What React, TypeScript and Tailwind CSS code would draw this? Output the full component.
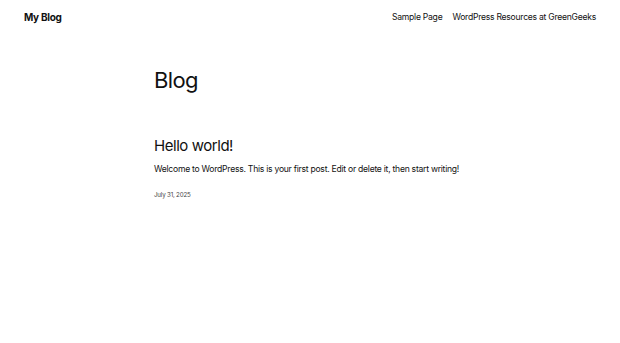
import React from 'react'

const App = () => {
    return (
        <div className="min-h-[343px] w-full bg-white text-[#111111]" style={{ fontFamily: 'Inter, "Noto Sans", sans-serif' }}>
            <header className="flex h-[34px] items-center justify-between px-6">
                <a className="text-[10px] font-bold tracking-[-0.03em]">My Blog</a>
                <nav className="flex gap-[10px] text-[8.6px] tracking-[-0.03em]">
                    <a>Sample Page</a>
                    <a>WordPress Resources at GreenGeeks</a>
                </nav>
            </header>
            <main className="mx-auto w-[312px] pt-[35px]">
                <h1 className="text-[22px] leading-none tracking-[-0.03em]">Blog</h1>
                <article className="mt-[47px]">
                    <h2 className="text-[15px] leading-none tracking-[-0.03em]">Hello world!</h2>
                    <p className="mt-[10px] whitespace-nowrap text-[8.6px] leading-[12px] tracking-[-0.03em]">
                        Welcome to WordPress. This is your first post. Edit or delete it, then start writing!
                    </p>
                    <p className="mt-[15px] text-[6.2px] leading-[9px] tracking-[-0.03em] text-[#444444]">July 31, 2025</p>
                </article>
            </main>
        </div>
    )
}

export default App
